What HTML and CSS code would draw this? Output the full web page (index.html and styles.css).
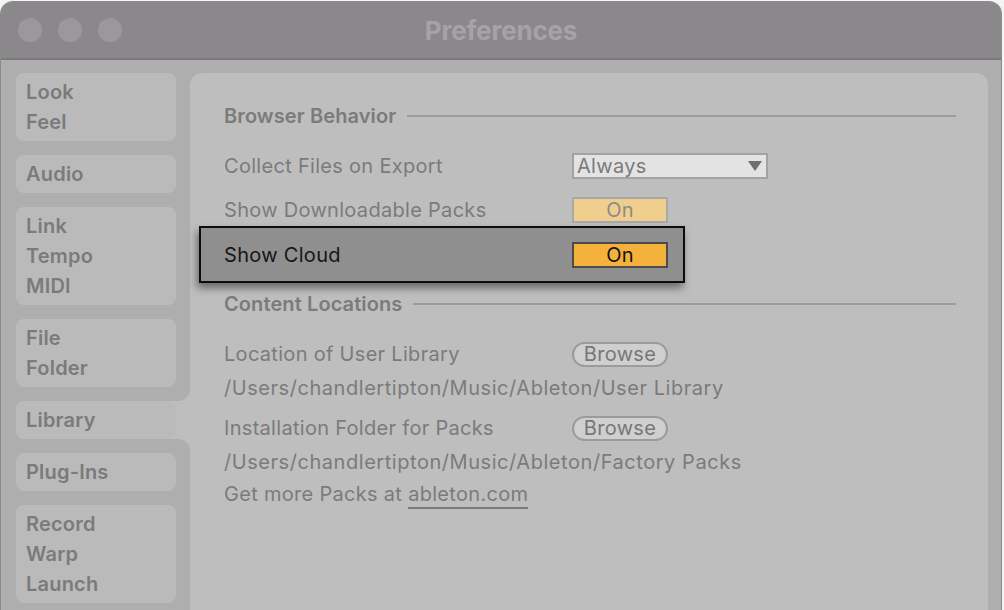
FILE: index.html
```html
<!DOCTYPE html>
<html>
<head>
<meta charset="utf-8">
<title>Preferences</title>
<link rel="stylesheet" href="styles.css">
</head>
<body>
<div class="window">
  <header class="titlebar">
    <div class="lights"><span></span><span></span><span></span></div>
    <h1 class="title">Preferences</h1>
    <div class="spacer"></div>
  </header>
  <div class="body">
    <nav class="sidebar">
      <div class="group group-top">
        <div class="tab"><span>Look</span><span>Feel</span></div>
        <div class="tab"><span>Audio</span></div>
        <div class="tab"><span>Link</span><span>Tempo</span><span>MIDI</span></div>
        <div class="tab"><span>File</span><span>Folder</span></div>
      </div>
      <div class="group group-current">
        <div class="tab"><span>Library</span></div>
      </div>
      <div class="group group-bottom">
        <div class="tab"><span>Plug-Ins</span></div>
        <div class="tab"><span>Record</span><span>Warp</span><span>Launch</span></div>
      </div>
    </nav>
    <main class="panel">
      <div class="section-head"><span>Browser Behavior</span><i class="rule"></i></div>
      <div class="row">
        <span class="label">Collect Files on Export</span>
        <div class="select"><span>Always</span><i class="caret"></i></div>
      </div>
      <div class="row">
        <span class="label">Show Downloadable Packs</span>
        <div class="toggle toggle-dim">On</div>
      </div>
      <div class="row row-highlight">
        <span class="label">Show Cloud</span>
        <div class="toggle toggle-on">On</div>
      </div>
      <div class="section-head section-second"><span>Content Locations</span><i class="rule"></i></div>
      <div class="row">
        <span class="label">Location of User Library</span>
        <div class="browse">Browse</div>
      </div>
      <div class="line line-path">/Users/chandlertipton/Music/Ableton/User Library</div>
      <div class="row row-gap">
        <span class="label">Installation Folder for Packs</span>
        <div class="browse">Browse</div>
      </div>
      <div class="line line-path">/Users/chandlertipton/Music/Ableton/Factory Packs</div>
      <div class="line line-more">Get more Packs at <a class="link">ableton.com</a></div>
    </main>
  </div>
</div>
</body>
</html>
```
FILE: styles.css
```css
* { box-sizing: border-box; }
html, body { margin: 0; padding: 0; }
body {
  background: #f4f4f4;
  width: 1004px;
  height: 610px;
  overflow: hidden;
  font-family: "Inter", "Noto Sans", sans-serif;
}
.window {
  margin: 2px 3px 0 1px;
  height: 608px;
  border-radius: 12px 12px 0 0;
  overflow: hidden;
  background: #aeaeae;
  display: flex;
  flex-direction: column;
  box-shadow: 0 0 0 1px #8a8a8a;
}
.titlebar {
  height: 58px;
  flex: none;
  background: #8b888b;
  border-bottom: 2px solid #7d7a7d;
  display: grid;
  grid-template-columns: 1fr auto 1fr;
  align-items: center;
  padding: 0 17px;
}
.lights { display: flex; gap: 16px; }
.lights span {
  width: 24px; height: 24px; border-radius: 50%;
  background: #9b989b;
}
.title {
  margin: 0;
  font-family: "Inter", sans-serif;
  font-weight: 700;
  font-size: 26px;
  letter-spacing: -0.2px;
  color: #a6a3a6;
}
.body {
  flex: 1;
  display: flex;
  padding: 13px 13px 0 0;
  min-height: 0;
}
.sidebar {
  width: 189px;
  flex: none;
  display: flex;
  flex-direction: column;
  background: #bebebe;
}
.group { display: flex; flex-direction: column; gap: 14px; padding-left: 15px; padding-right: 14px; }
.group-top { background: #aeaeae; padding-bottom: 14px; border-bottom-right-radius: 12px; }
.group-current { background: linear-gradient(90deg, #aeaeae 50%, transparent 50%); }
.group-bottom { background: #aeaeae; padding-top: 14px; border-top-right-radius: 12px; flex: 1; }
.tab {
  background: #bababa;
  border-radius: 8px;
  padding: 4px 10px;
  display: flex;
  flex-direction: column;
}
.tab span {
  height: 30px;
  line-height: 30px;
  font-size: 20px;
  font-weight: 600;
  letter-spacing: 0.2px;
  color: #7b7b7b;
}
.panel {
  flex: 1;
  background: #bebebe;
  border-radius: 12px 12px 0 0;
  padding: 28px 32px 0 34px;
  color: #7b7b7b;
  font-size: 20px;
  letter-spacing: 0.3px;
}
.section-head {
  height: 30px;
  display: flex;
  align-items: center;
  gap: 11px;
  font-weight: 600;
  margin-bottom: 13px;
  letter-spacing: 0.1px;
}
.section-second { margin-top: 13px; }
.rule { flex: 1; height: 2px; background: #9c9c9c; }
.row {
  height: 44px;
  display: grid;
  grid-template-columns: 348px auto;
  align-items: center;
  justify-items: start;
}
.row-gap { margin-top: 6px; }
.row-highlight {
  width: 486px;
  height: 57px;
  margin: -6px 0 -7px -25px;
  padding-left: 23px;
  background: #8f8f8f;
  border: 2px solid #0c0c0c;
  box-shadow: -2px 5px 8px rgba(0,0,0,0.45);
  color: #161616;
  position: relative;
}
.select {
  width: 196px;
  height: 26px;
  background: #e3e3e3;
  border: 2px solid #a3a3a3;
  display: flex;
  align-items: center;
  justify-content: space-between;
  padding: 0 4px 0 3px;
  color: #7b7b7b;
}
.caret {
  width: 0; height: 0;
  border-left: 7px solid transparent;
  border-right: 7px solid transparent;
  border-top: 10px solid #6f6f6f;
}
.toggle {
  width: 96px;
  height: 26px;
  border: 2px solid;
  display: flex;
  align-items: center;
  justify-content: center;
}
.toggle-dim { background: #f0ce8e; border-color: #a9a9a9; color: #8b8b8b; }
.toggle-on { background: #f4b23c; border-color: #4b4b4b; color: #111; }
.browse {
  width: 96px;
  height: 25px;
  border: 2px solid #9b9b9b;
  border-radius: 13px;
  background: #cfcfcf;
  display: flex;
  align-items: center;
  justify-content: center;
  color: #777;
}
.line { height: 24px; line-height: 24px; }
.line-path { letter-spacing: 0.55px; }
.line-more { margin-top: 8px; }
.link {
  color: inherit;
  text-decoration: none;
  border-bottom: 2px solid #7b7b7b;
  padding-bottom: 1px;
}
```
